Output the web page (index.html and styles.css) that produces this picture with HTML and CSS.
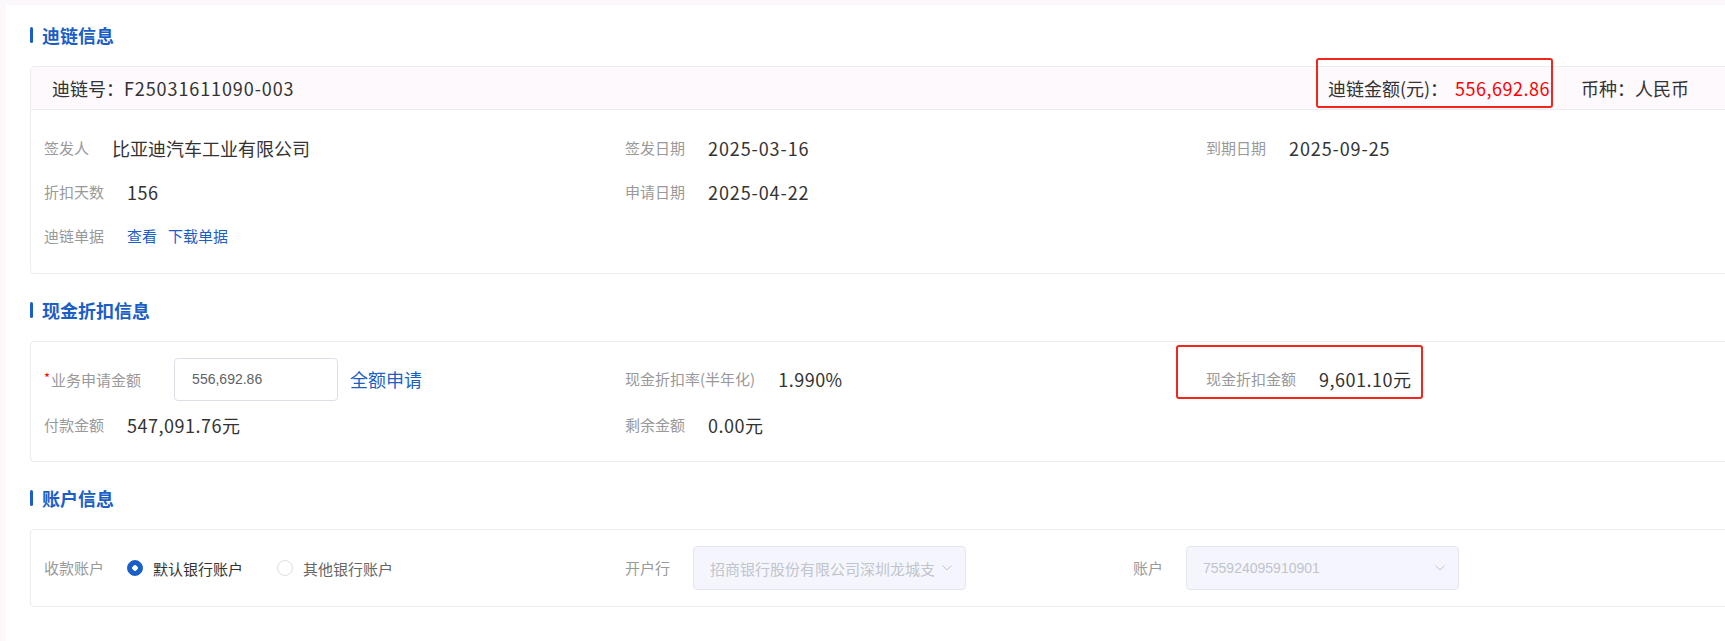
FILE: index.html
```html
<!DOCTYPE html>
<html lang="zh-CN">
<head>
    <meta charset="UTF-8">
    <title>迪链详情</title>
    <link rel="stylesheet" href="styles.css">
</head>
<body>
    <div class="page">
        <div class="section-title">迪链信息</div>
        <div class="card">
            <div class="card-head">
                <span>迪链号：<span class="num wide">F25031611090-003</span></span>
                <div class="head-right">
                    <span class="mark head-mark">迪链金额(元)：<em class="red num">556,692.86</em></span>
                    <span>币种：人民币</span>
                </div>
            </div>
            <div class="card-body grid-3 rows-44">
                <div class="field"><span class="label">签发人</span><span class="value">比亚迪汽车工业有限公司</span></div>
                <div class="field"><span class="label">签发日期</span><span class="value num wide">2025-03-16</span></div>
                <div class="field"><span class="label">到期日期</span><span class="value num wide">2025-09-25</span></div>
                <div class="field"><span class="label">折扣天数</span><span class="value num">156</span></div>
                <div class="field"><span class="label">申请日期</span><span class="value num wide">2025-04-22</span></div>
                <div></div>
                <div class="field">
                    <span class="label">迪链单据</span>
                    <a class="link">查看</a>
                    <a class="link">下载单据</a>
                </div>
            </div>
        </div>

        <div class="section-title">现金折扣信息</div>
        <div class="card">
            <div class="card-body grid-3 rows-46">
                <div class="field">
                    <span class="label"><span class="req">*</span>业务申请金额</span>
                    <input type="text" class="amount-input" value="556,692.86">
                    <a class="link big">全额申请</a>
                </div>
                <div class="field"><span class="label">现金折扣率(半年化)</span><span class="value num">1.990%</span></div>
                <div class="field">
                    <span class="mark cash-mark"><span class="label">现金折扣金额</span><span class="value num">9,601.10元</span></span>
                </div>
                <div class="field"><span class="label">付款金额</span><span class="value num">547,091.76元</span></div>
                <div class="field"><span class="label">剩余金额</span><span class="value num">0.00元</span></div>
            </div>
        </div>

        <div class="section-title">账户信息</div>
        <div class="card">
            <div class="card-body account">
                <div class="field">
                    <span class="label">收款账户</span>
                    <label class="radio checked"><i></i>默认银行账户</label>
                    <label class="radio"><i></i>其他银行账户</label>
                </div>
                <div class="field">
                    <span class="label">开户行</span>
                    <div class="select">
                        <span>招商银行股份有限公司深圳龙城支</span>
                        <svg viewBox="0 0 10 6"><polyline points="0.5,0.5 5,5 9.5,0.5"/></svg>
                    </div>
                </div>
                <div class="field">
                    <span class="label">账户</span>
                    <div class="select num-select">
                        <span>755924095910901</span>
                        <svg viewBox="0 0 10 6"><polyline points="0.5,0.5 5,5 9.5,0.5"/></svg>
                    </div>
                </div>
            </div>
        </div>
    </div>
</body>
</html>
```

FILE: styles.css
```css
* {
    box-sizing: border-box;
}

body {
    margin: 0;
    background: #fbf7fb;
    font-family: "Noto Sans CJK SC", "Noto Sans", sans-serif;
    color: #333;
    overflow: hidden;
}

.page {
    margin: 5px 0 0 6px;
    width: 1764px;
    min-height: 636px;
    background: #fff;
    padding: 19px 24px 20px;
}

.section-title {
    display: flex;
    align-items: center;
    gap: 9px;
    height: 22px;
    margin: 25px 0 20px;
    font-size: 18px;
    font-weight: bold;
    color: #1b5ec6;
}

.section-title:first-child {
    margin-top: 0;
}

.section-title::before {
    content: '';
    width: 3px;
    height: 16px;
    border-radius: 2px;
    background: #1b5ec6;
}

.card {
    border: 1px solid #ebebf1;
    border-radius: 4px;
}

.card-head {
    display: flex;
    align-items: center;
    justify-content: space-between;
    height: 43px;
    padding: 0 56px 0 21px;
    background: #fdf9fd;
    border-bottom: 1px solid #ececf2;
    font-size: 18px;
    line-height: 24px;
}

.head-right {
    display: flex;
    align-items: center;
    gap: 31px;
}

.red {
    font-style: normal;
    color: #f00;
    margin-left: 7px;
}

/* digits are a little narrower than in the original font */
.num {
    letter-spacing: 0.5px;
}

.num.wide {
    letter-spacing: 0.9px;
}

.mark {
    position: relative;
    display: inline-flex;
    align-items: center;
}

.mark::after {
    content: '';
    position: absolute;
    border: 2px solid #f3261d;
    border-radius: 3px;
    pointer-events: none;
}

.head-mark::after {
    left: -12px;
    right: -3px;
    top: -18px;
    bottom: -8px;
}

.cash-mark::after {
    left: -30px;
    right: -12px;
    top: -22px;
    bottom: -8px;
}

.card-body {
    padding: 16px 13px 15px;
}

.grid-3 {
    display: grid;
    grid-template-columns: 581px 581px 1fr;
}

.rows-44 {
    grid-auto-rows: 44px;
}

.rows-46 {
    grid-auto-rows: 46px;
    padding: 14px 13px 13px;
}

.field {
    display: flex;
    align-items: center;
}

.label {
    font-size: 15px;
    line-height: 20px;
    color: #999;
    margin-right: 23px;
    white-space: nowrap;
}

.value {
    font-size: 18px;
    line-height: 24px;
    color: #333;
    white-space: nowrap;
}

.link {
    font-size: 15px;
    line-height: 20px;
    color: #1b5ec6;
    margin-right: 11px;
    cursor: pointer;
}

.link.big {
    font-size: 18px;
    line-height: 24px;
    margin-left: 12px;
}

.req {
    color: #f00;
    font-size: 13px;
    vertical-align: 3px;
    margin-right: 1px;
}

.amount-input {
    width: 164px;
    height: 43px;
    margin-left: 10px;
    padding: 0 17px;
    border: 1px solid #dcdfe6;
    border-radius: 4px;
    font: 14px "Liberation Sans", sans-serif;
    color: #606266;
    outline: none;
}

.account {
    display: grid;
    grid-template-columns: 581px 508px 1fr;
    grid-auto-rows: 44px;
    padding: 16px 13px 16px;
}

.radio {
    display: flex;
    align-items: center;
    gap: 10px;
    margin-right: 34px;
    font-size: 15px;
    color: #666;
    cursor: pointer;
}

.radio i {
    width: 16px;
    height: 16px;
    border-radius: 50%;
    border: 1px solid #dcdfe6;
    background: #fff;
}

.radio.checked {
    color: #333;
}

.radio.checked i {
    border-color: #1b5ec6;
    background: radial-gradient(circle, #fff 2.5px, #1b5ec6 3px);
}

.select {
    display: flex;
    align-items: center;
    width: 273px;
    height: 44px;
    padding: 0 13px 0 16px;
    background: #f5f6fd;
    border: 1px solid #e4e6ef;
    border-radius: 4px;
    font-size: 15px;
    color: #c0c4cc;
}

.select span {
    flex: 1;
    overflow: hidden;
    white-space: nowrap;
}

.num-select span {
    font-family: "Liberation Sans", sans-serif;
    font-size: 14px;
}

.select svg {
    width: 10px;
    height: 6px;
    margin-left: 6px;
    fill: none;
    stroke: #c0c4cc;
    stroke-width: 1;
}
```
